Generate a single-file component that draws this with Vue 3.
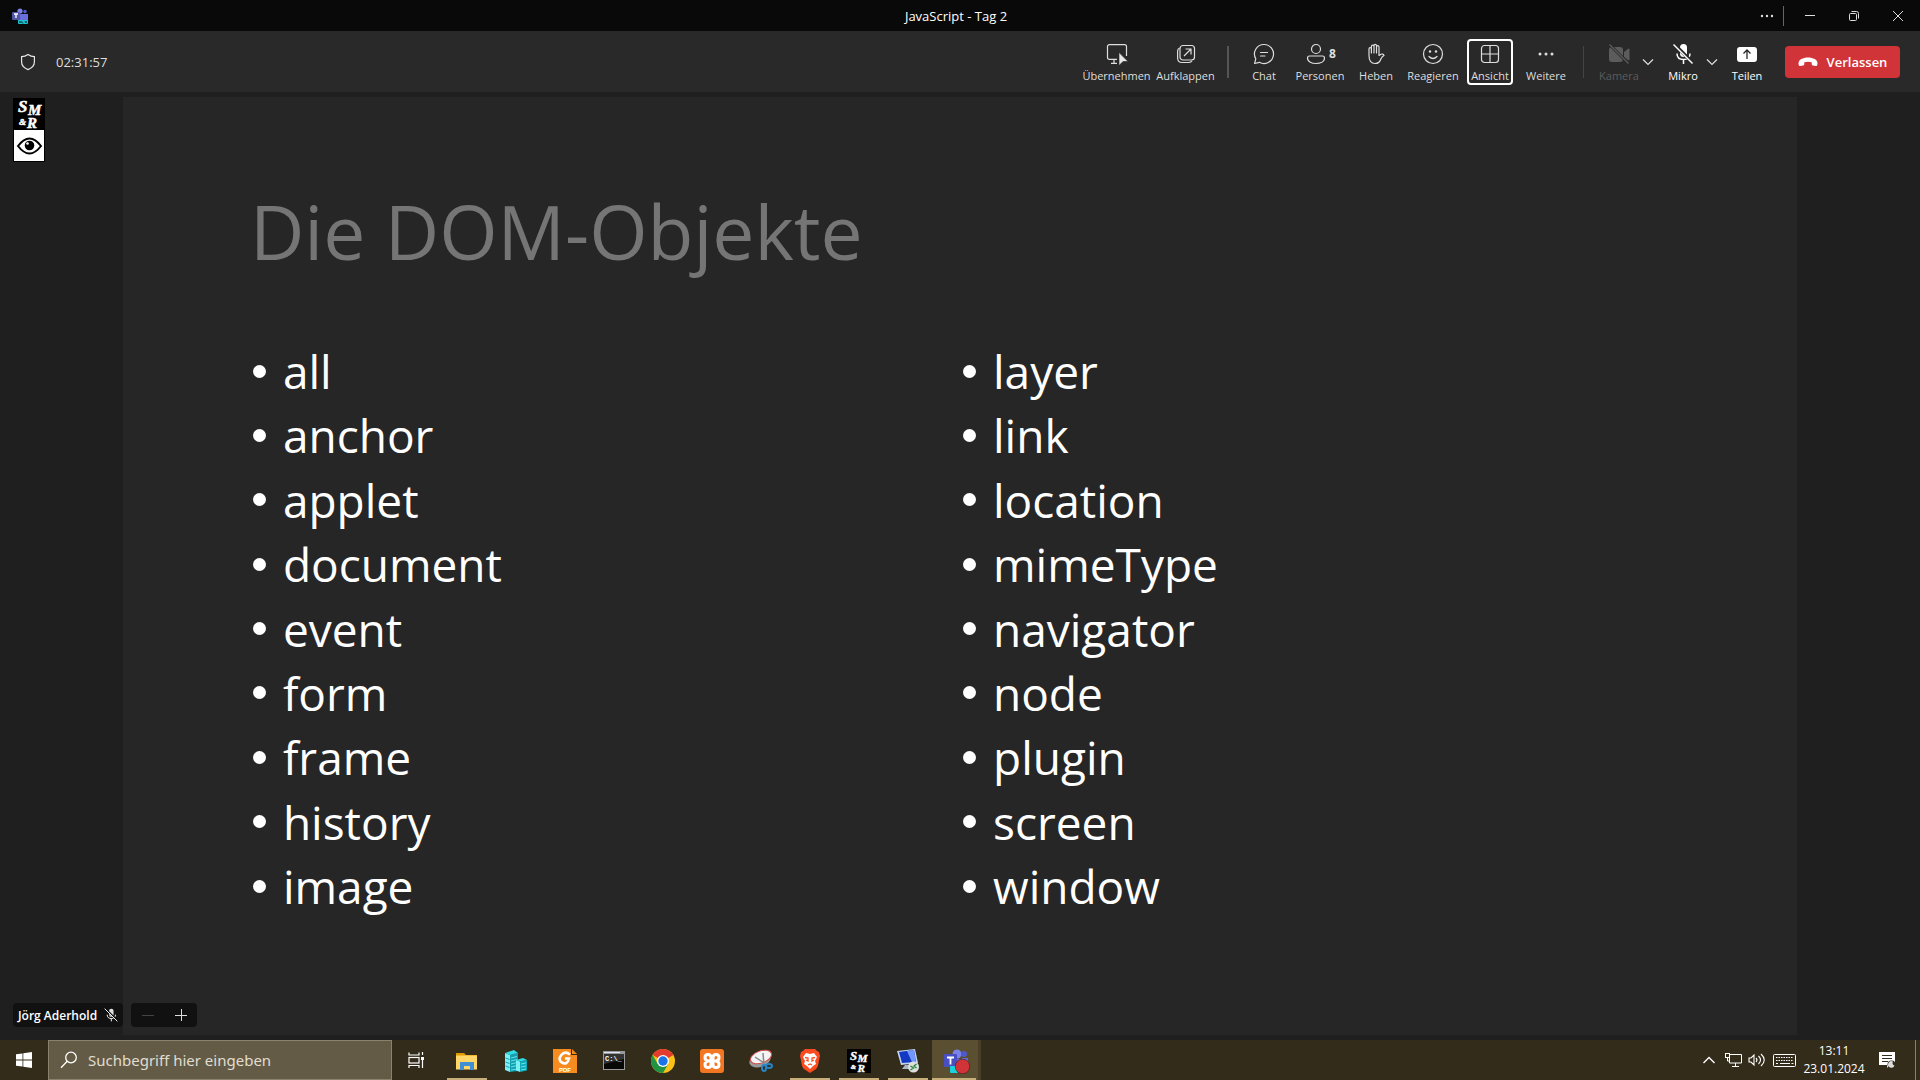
<script setup>
const leftColumn = ['all', 'anchor', 'applet', 'document', 'event', 'form', 'frame', 'history', 'image']
const rightColumn = ['layer', 'link', 'location', 'mimeType', 'navigator', 'node', 'plugin', 'screen', 'window']
</script>

<template>
  <div class="desktop">
    <header class="titlebar">
      <svg class="teams-logo" width="18" height="18" viewBox="0 0 18 18" aria-hidden="true">
        <circle cx="9" cy="4" r="2.6" fill="#7b83eb" />
        <circle cx="14" cy="4.600" r="1.800" fill="#5059c9" />
        <path d="M7 7h6v9H9q-2 0-2-3zM13 7h4v6q0 2-3 2h-1z" fill="#6970dc" />
        <rect x="1" y="5" width="8" height="8" rx="1" fill="#5157a7" />
        <path d="M3 7h4M5 7v4" stroke="#fff" stroke-width="1.300" fill="none" />
        <rect x="7" y="13" width="10" height="4" rx="1" fill="#17c7cf" />
        <path d="M8.500 16v-2l1.500 2v-2M11 14v2h1.500M14 14l.5 2 .7-2 .5 2" stroke="#123" stroke-width=".6" fill="none" />
      </svg>
      <h1 class="window-title">JavaScript - Tag 2</h1>
      <div class="window-buttons">
        <button class="win more" aria-label="Mehr">
          <svg width="14" height="4" viewBox="0 0 14 4" fill="#ddd"><circle cx="2" cy="2" r="1.200" /><circle cx="7" cy="2" r="1.200" /><circle cx="12" cy="2" r="1.200" /></svg>
        </button>
        <span class="win-divider"></span>
        <button class="win" aria-label="Minimieren">
          <svg width="12" height="12" viewBox="0 0 12 12" fill="none" stroke="#ddd"><path d="M1 5.500h10" /></svg>
        </button>
        <button class="win" aria-label="Wiederherstellen">
          <svg width="12" height="12" viewBox="0 0 12 12" fill="none" stroke="#ddd"><rect x="1.500" y="3.500" width="7" height="7" rx="1" /><path d="M3.500 1.500h5q2 0 2 2v5" /></svg>
        </button>
        <button class="win" aria-label="Schließen">
          <svg width="12" height="12" viewBox="0 0 12 12" fill="none" stroke="#ddd"><path d="M1 1l10 10M11 1L1 11" /></svg>
        </button>
      </div>
    </header>

    <nav class="toolbar">
      <svg class="shield" width="16" height="18" viewBox="0 0 16 18" fill="none" stroke="#e6e6e6" stroke-width="1.200"><path d="M8 1.500Q5 3.600 1.600 3.700V9q0 5 6.400 7.600Q14.400 14 14.400 9V3.700Q11 3.600 8 1.500z" /></svg>
      <time class="timer">02:31:57</time>

      <div class="actions">
        <button class="tool broad">
          <svg width="24" height="22" viewBox="0 0 24 22" fill="none" stroke="currentColor" stroke-width="1.200"><path d="M12 16.400H4.500q-2 0-2-2V3.600q0-2 2-2h15q2 0 2 2V13M9 16.400v4M6 20.400h6" /><path d="M14 9.500l9 9h-5l-4 4z" fill="#e6e6e6" stroke="#292929" stroke-width=".6" /></svg>
          <span>Übernehmen</span>
        </button>
        <button class="tool broad">
          <svg width="20" height="22" viewBox="0 0 20 22" fill="none" stroke="currentColor" stroke-width="1.200"><rect x="4" y="2.500" width="14.500" height="14.500" rx="3" /><path d="M3.500 5Q1.600 6 1.600 8v7q0 4.500 4.500 4.500H13q2 0 3-1.800M8 13l6.500-6.500M9.500 6h5.500v5.500" /></svg>
          <span>Aufklappen</span>
        </button>
        <span class="divider bright"></span>
        <button class="tool">
          <svg width="22" height="22" viewBox="0 0 22 22" fill="none" stroke="currentColor" stroke-width="1.200"><path d="M11 1.500a9.500 9.500 0 1 1-4.600 17.800L1.600 20.500l1.200-4.700A9.500 9.500 0 0 1 11 1.500zM7.500 9.500h7M7.500 13h4.500" stroke-linecap="round" stroke-linejoin="round" /></svg>
          <span>Chat</span>
        </button>
        <button class="tool">
          <span class="people">
            <svg width="20" height="22" viewBox="0 0 20 22" fill="none" stroke="currentColor" stroke-width="1.200"><circle cx="10" cy="6" r="4.500" /><path d="M3.500 13h13q2 0 2 2c0 4-4.500 5.500-8.500 5.500S1.500 19 1.500 15q0-2 2-2z" /></svg>
            <b>8</b>
          </span>
          <span>Personen</span>
        </button>
        <button class="tool">
          <svg width="20" height="22" viewBox="0 0 20 22" fill="none" stroke="currentColor" stroke-width="1.200" stroke-linecap="round" stroke-linejoin="round"><path d="M3 12.500V6q0-1.300 1.200-1.300T5.400 6v4M5.400 10V3.500q0-1.300 1.300-1.300T8 3.500V10M8 10V2.500q0-1.200 1.200-1.200t1.300 1.200V10M10.500 10V4q0-1.300 1.200-1.300T13 4v8.500l1.200-.8q1.300-1 2.500-.6 1 .4 1.300 1.400-2 1-3 3.200-1.500 4.800-6 4.800-6 0-6-8" /></svg>
          <span>Heben</span>
        </button>
        <button class="tool react">
          <svg width="22" height="22" viewBox="0 0 22 22" fill="none" stroke="currentColor" stroke-width="1.200"><circle cx="11" cy="11" r="9.500" /><path d="M7 13.500q4 4 8 0" stroke-linecap="round" /><circle cx="8" cy="8.500" r="1.200" fill="currentColor" stroke="none" /><circle cx="14" cy="8.500" r="1.200" fill="currentColor" stroke="none" /></svg>
          <span>Reagieren</span>
        </button>
        <button class="tool selected">
          <svg width="20" height="22" viewBox="0 0 20 22" fill="none" stroke="currentColor" stroke-width="1.200"><rect x="1.500" y="2.500" width="17" height="17" rx="3" /><path d="M10 2.500v17M1.500 11h17" /></svg>
          <span>Ansicht</span>
        </button>
        <button class="tool">
          <svg width="20" height="22" viewBox="0 0 20 22" fill="currentColor"><circle cx="4" cy="11" r="1.500" /><circle cx="10" cy="11" r="1.500" /><circle cx="16" cy="11" r="1.500" /></svg>
          <span>Weitere</span>
        </button>
        <span class="divider"></span>
        <button class="tool device" disabled>
          <svg width="22" height="22" viewBox="0 0 22 22" fill="currentColor"><rect x="1" y="4" width="14" height="15" rx="3" /><path d="M16 9l4.500-3.500q1 0 1 1v10q0 1-1 1L16 14z" /><path d="M1 1l20 20" stroke="#292929" stroke-width="3" /><path d="M1.500 1.500l19 19" stroke="currentColor" stroke-width="1.300" /></svg>
          <span>Kamera</span>
        </button>
        <button class="chevron" aria-label="Kameraoptionen">
          <svg width="12" height="8" viewBox="0 0 12 8" fill="none" stroke="currentColor" stroke-width="1.200"><path d="M1 1.500l5 5 5-5" /></svg>
        </button>
        <button class="tool device mic">
          <svg width="22" height="22" viewBox="0 0 22 22" fill="none" stroke="currentColor"><rect x="8" y="1" width="7" height="13" rx="3.500" fill="currentColor" stroke="none" /><path d="M5 10.500q0 6 6.500 6T18 10.500M11.500 16.500V21" stroke-width="1.500" /><path d="M2 1l19 19" stroke="#292929" stroke-width="3.500" /><path d="M1.500 1.500l19 19" stroke-width="1.400" /></svg>
          <span>Mikro</span>
        </button>
        <button class="chevron" aria-label="Mikrofonoptionen">
          <svg width="12" height="8" viewBox="0 0 12 8" fill="none" stroke="currentColor" stroke-width="1.200"><path d="M1 1.500l5 5 5-5" /></svg>
        </button>
        <button class="tool share">
          <svg width="22" height="22" viewBox="0 0 22 22"><rect x="1" y="4" width="20" height="15" rx="3" fill="#fff" /><path d="M11 16V7.500M7.500 10.500L11 7l3.500 3.500" fill="none" stroke="#292929" stroke-width="1.300" /></svg>
          <span>Teilen</span>
        </button>
        <button class="leave">
          <svg width="20" height="10" viewBox="0 0 20 10" fill="#fff"><path d="M10 .5c5 0 9.500 2.200 9.500 5.700 0 2-.6 3-1.800 2.800l-3-.6q-1-.3-1-1.400V5.300Q10 4 6.300 5.300V7q0 1.100-1 1.400l-3 .6C1.100 9.200.5 8.200.5 6.200.5 2.700 5 .5 10 .5z" /></svg>
          Verlassen
        </button>
      </div>
    </nav>

    <main class="stage">
      <article class="slide">
        <h2>Die DOM-Objekte</h2>
        <div class="columns">
          <ul>
            <li v-for="item in leftColumn" :key="item">{{ item }}</li>
          </ul>
          <ul>
            <li v-for="item in rightColumn" :key="item">{{ item }}</li>
          </ul>
        </div>
      </article>

      <aside class="smr-widget">
        <svg width="32" height="32" viewBox="0 0 32 32" class="smr" aria-hidden="true">
          <rect width="32" height="32" fill="#000" />
          <text x="5" y="14" font-size="17">S</text><text x="15" y="17" font-size="15">M</text><text x="6" y="27" font-size="9">&amp;</text><text x="14" y="30" font-size="15">R</text>
        </svg>
        <svg width="32" height="32" viewBox="0 0 32 32" aria-hidden="true">
          <rect width="32" height="32" fill="#000" /><rect x="1" width="30" height="31" fill="#fff" />
          <path d="M5 16q11.500-15 23 0-11.500 15-23 0z" fill="none" stroke="#000" stroke-width="2" /><circle cx="16.500" cy="15.500" r="4.800" /><circle cx="14.500" cy="13.500" r="1.300" fill="#fff" />
        </svg>
      </aside>

      <footer class="overlay">
        <div class="speaker">
          Jörg Aderhold
          <svg width="14" height="14" viewBox="0 0 22 22" fill="none" stroke="#fff"><rect x="8" y="1" width="7" height="13" rx="3.500" fill="#ddd" stroke="none" /><path d="M5 10.500q0 6 6.500 6T18 10.500M11.500 16.500V21" stroke-width="1.500" /><path d="M2 1l19 19" stroke="#111" stroke-width="3" /><path d="M1 1l20 20" stroke-width="1.500" /></svg>
        </div>
        <div class="zoom">
          <button aria-label="Verkleinern" disabled><svg width="12" height="12" viewBox="0 0 12 12" stroke="#444"><path d="M0 6.500h12" /></svg></button>
          <button aria-label="Vergrößern"><svg width="12" height="12" viewBox="0 0 12 12" stroke="#ddd"><path d="M0 6.500h12M6.500 0v12" /></svg></button>
        </div>
      </footer>
    </main>

    <footer class="taskbar">
      <button class="start" aria-label="Start">
        <svg width="16" height="16" viewBox="0 0 16 16" fill="#fff"><path d="M0 2.300l6.500-.9v6.200H0zM7.300 1.300L16 0v7.600H7.300zM0 8.400h6.500v6.200L0 13.700zM7.300 8.400H16V16l-8.700-1.300z" /></svg>
      </button>
      <label class="search">
        <svg width="18" height="18" viewBox="0 0 18 18" fill="none" stroke="#fff" stroke-width="1.300"><circle cx="11" cy="6.500" r="5.300" /><path d="M7.200 10.300L1 16.800" /></svg>
        <input type="text" placeholder="Suchbegriff hier eingeben" aria-label="Suchbegriff hier eingeben" />
      </label>
      <button class="task-view" aria-label="Taskansicht">
        <svg width="17" height="17" viewBox="0 0 17 17" fill="none" stroke="#fff" stroke-width="1.200"><path d="M1 .5v2.500h10V.5M1 16v-2.500h10V16M14.500 0v3M14.500 8v8" /><rect x="1" y="5.500" width="10" height="5.500" /><rect x="13" y="5" width="3" height="3" fill="#fff" stroke="none" /></svg>
      </button>

      <div class="apps">
        <button class="app open" aria-label="Explorer">
          <svg width="24" height="24" viewBox="0 0 24 24"><path d="M1 4h8l2 2h11v14H1z" fill="#e09a00" /><rect x="1" y="6.500" width="21" height="14" fill="#ffd667" /><path d="M5 21v-8h14v8h-4v-4H9v4z" fill="#3f8fd2" /></svg>
        </button>
        <button class="app" aria-label="Server">
          <svg width="24" height="24" viewBox="0 0 24 24"><path d="M1 4l5 2v17l-5-2z" fill="#7df0f5" /><path d="M6 6l8-2v18l-8 1z" fill="#149fb0" /><path d="M1 4l9-3 4 3-8 2z" fill="#2fdbe6" /><path d="M7 9l6-1.500M7 12l6-1.500M7 15l6-1.500M7 18l6-1.500M7 21l6-1" stroke="#5fe4ec" /><path d="M1.500 9l4 1.500M1.500 13l4 1.500M1.500 17l4 1.500" stroke="#149fb0" /><path d="M12 11l4 1.500V23l-4-1.500z" fill="#7df0f5" /><path d="M16 12.500l7-1.500v10.500L16 23z" fill="#10aabb" /><path d="M12 11l7-2 4 2-7 1.500z" fill="#2fdbe6" /><path d="M17 15l5-1M17 18l5-1M17 21l5-1" stroke="#5fe4ec" /></svg>
        </button>
        <button class="app" aria-label="PDF">
          <svg width="24" height="24" viewBox="0 0 24 24"><path d="M0 0h18v6h6v18H0z" fill="#f68b1f" /><path d="M19 0l5 5h-5z" fill="#f68b1f" /><path d="M17 5.500Q12 1.500 8.300 6t.5 7.500q5.500 3 7.200-4h-4" fill="none" stroke="#fff" stroke-width="2.600" /><text x="6" y="23" font-size="6" font-weight="700" fill="#fff" font-family="Liberation Sans, sans-serif">PDF</text></svg>
        </button>
        <button class="app" aria-label="Eingabeaufforderung">
          <svg width="24" height="24" viewBox="0 0 24 24"><rect x="1" y="2" width="22" height="19" fill="#999" /><rect x="2" y="5" width="20" height="15" fill="#080808" /><path d="M2 5h20v5L2 15z" fill="#333" /><rect x="2" y="3" width="16" height="1" fill="#dce5fa" /><text x="3" y="12" font-size="7" font-weight="700" fill="#fff" font-family="Liberation Mono, monospace">C:\_</text></svg>
        </button>
        <button class="app" aria-label="Chrome">
          <svg width="24" height="24" viewBox="0 0 24 24"><circle cx="12" cy="12" r="12" fill="#fbc116" /><path d="M12 12L1.600 6A12 12 0 0 1 22.400 6z" fill="#e33b2e" /><path d="M1.600 6A12 12 0 0 0 12 24l5.200-9H6.800z" fill="#229342" /><circle cx="12" cy="12" r="6" fill="#fff" /><circle cx="12" cy="12" r="4.700" fill="#1a73e8" /></svg>
        </button>
        <button class="app" aria-label="XAMPP">
          <svg width="24" height="24" viewBox="0 0 24 24"><rect width="24" height="24" rx="3" fill="#f37623" /><path d="M8 5.500q-3 0-3 3t3 3.500h8q3-.5 3-3.500t-3-3-3 3v7q0 3 3 3t3-3-3-3.500H8q-3 .5-3 3.500t3 3 3-3v-7q0-3-3-3z" fill="none" stroke="#fff" stroke-width="3" /></svg>
        </button>
        <button class="app" aria-label="Snipping Tool">
          <svg width="24" height="24" viewBox="0 0 24 24"><ellipse cx="11" cy="11" rx="11" ry="7" transform="rotate(-20 11 11)" fill="#999" /><ellipse cx="12" cy="8" rx="11" ry="6" transform="rotate(-20 12 8)" fill="#f4f4f4" stroke="#d14e4e" /><path d="M6 8l9 6M14 4l1 12" stroke="#888" stroke-width="1.500" /><g fill="none" stroke="#2585c7" stroke-width="2"><ellipse cx="15" cy="19" rx="2" ry="3" /><ellipse cx="20" cy="17" rx="3" ry="2" /></g></svg>
        </button>
        <button class="app open" aria-label="Brave">
          <svg width="24" height="24" viewBox="0 0 24 24"><path d="M7 0h10l2 2 2 1 1 4-1 4q-1 8-3 9l-6 4-6-4q-2-1-3-9L2 7l1-4 2-1z" fill="#fb4b20" /><path d="M8 4l4 1 4-1 3 4-2 4 1 3-3 2-3 3-3-3-3-2 1-3-2-4z" fill="#fff" /><path d="M7 8.500l3 .5v3l-2-1M17 8.500l-3 .5v3l2-1M10 16l2-1 2 1" fill="none" stroke="#fb4b20" stroke-width="1.300" /></svg>
        </button>
        <button class="app open" aria-label="SMR">
          <svg width="24" height="24" viewBox="0 0 32 32" class="smr"><rect width="32" height="32" fill="#000" /><text x="4" y="14" font-size="17">S</text><text x="14" y="17" font-size="15">M</text><text x="5" y="27" font-size="9">&amp;</text><text x="14" y="30" font-size="15">R</text></svg>
        </button>
        <button class="app open" aria-label="Remotedesktop">
          <svg width="24" height="24" viewBox="0 0 24 24"><path d="M1 2l18-2 3 14-17 2z" fill="#c4d5ea" /><path d="M3 3l15-2 2 12-14 1z" fill="#1238c4" /><path d="M11 2l7-1 2 12-4 .3z" fill="#7298ff" /><path d="M9 16h6l1 4H6z" fill="#a9b8c6" /><circle cx="17.500" cy="18" r="5.500" fill="#dedede" /><path d="M14.500 17l3 2-3 2M20.500 15l-2.500 2 2.500 2" fill="none" stroke="#288c39" stroke-width="1.400" /></svg>
        </button>
        <button class="app open active" aria-label="Teams">
          <svg width="28" height="26" viewBox="0 0 28 26"><circle cx="14" cy="6" r="4.500" fill="#7b83eb" /><circle cx="21" cy="6" r="3" fill="#5059c9" /><path d="M11 11h9v13h-4q-5 0-5-5zM19 10h6v9h-6z" fill="#6269ce" /><rect x="1" y="6" width="13" height="13" rx="1" fill="#474fc2" /><path d="M4 9.500h7M7.500 9.500v7" stroke="#fff" stroke-width="1.800" /><rect x="7" y="18" width="8" height="7" rx="1" fill="#19d3dc" /><circle cx="19.500" cy="18.500" r="7.300" fill="#d13438" stroke="#311" stroke-width=".5" /></svg>
        </button>
      </div>

      <div class="tray">
        <button class="tray-chevron" aria-label="Ausgeblendete Symbole"><svg width="12" height="8" viewBox="0 0 12 8" fill="none" stroke="#fff" stroke-width="1.400"><path d="M.5 7L6 1.500 11.500 7" /></svg></button>
        <button class="tray-icon" aria-label="Netzwerk"><svg width="17" height="14" viewBox="0 0 17 14" fill="none" stroke="#fff"><path d="M5 1.500h11.500v8.500h-12V5M10.500 10v3M7 13.500h7" /><rect x=".5" y=".5" width="4" height="4" /><path d="M2.500 4.500V8H5" /></svg></button>
        <button class="tray-icon" aria-label="Lautstärke"><svg width="18" height="14" viewBox="0 0 18 14" fill="none" stroke="#fff" stroke-width="1.100"><path d="M1 5h2l3-3v10L3 9H1zM8 5q2 2 0 4M10.500 3q4 4 0 8M13 1q6.500 6 0 12" /></svg></button>
        <button class="tray-keyboard" aria-label="Bildschirmtastatur"><svg width="23" height="13" viewBox="0 0 23 13" fill="none" stroke="#fff"><rect x=".5" y=".5" width="22" height="12" rx="1" /><path d="M3 3.500h17M3 6.500h17" stroke-dasharray="1.500 1" /><path d="M3 9.500h2M7 9.500h10M18.500 9.500h2" /></svg></button>
        <time class="clock"><span>13:11</span><span>23.01.2024</span></time>
        <button class="notice" aria-label="Benachrichtigungen"><svg width="17" height="17" viewBox="0 0 17 17"><path d="M0 0h16v12h-5l-3 4v-3H0z" fill="#fff" /><path d="M3 3.500h10M3 6.500h10M3 9.500h6" stroke="#332c1b" /><circle cx="12.500" cy="12.500" r="4" fill="#332c1b" /><path d="M14 9.500a3.300 3.300 0 1 0 1.500 4q-3-1-1.500-4" fill="#ddd" /></svg></button>
        <span class="show-desktop"></span>
      </div>
    </footer>
  </div>
</template>

<style>
body { background: #1f1f1f; }
</style>

<style scoped>
* { box-sizing: border-box; }
.desktop { min-height: 100vh; display: flex; flex-direction: column; background: #1f1f1f; color: #fff; font-family: "Open Sans", "Noto Sans", sans-serif; overflow: hidden; }
svg { display: block; flex: none; }
button { margin: 0; padding: 0; border: 0; background: none; color: inherit; font: inherit; display: flex; align-items: center; justify-content: center; }

.titlebar { height: 31px; display: grid; grid-template-columns: 1fr auto 1fr; align-items: center; background: #090909; }
.teams-logo { margin-left: 11px; }
.window-title { margin: 0; padding-right: 8px; font-size: 13px; line-height: 18px; font-weight: 400; }
.window-buttons { display: flex; align-items: center; justify-content: flex-end; }
.win { width: 44px; height: 31px; }
.win.more { width: 32px; }
.win-divider { width: 1px; height: 20px; margin-right: 4px; background: #666; }

.toolbar { height: 61px; display: flex; align-items: center; padding: 0 20px; background: #292929; color: #dedede; }
.timer { margin-left: 20px; font-size: 13px; }
.actions { margin-left: auto; display: flex; align-items: center; }
.tool { width: 56px; height: 46px; flex-direction: column; justify-content: flex-start; padding-top: 4px; gap: 2px; font-size: 11px; line-height: 18px; white-space: nowrap; }
.tool.broad { width: 69px; }
.tool.react { width: 58px; }
.tool.selected { width: 46px; margin: 0 5px; padding-top: 2px; border: 2px solid #fff; border-radius: 4px; }
.tool.device { width: 42px; }
.tool:disabled { color: #5c5c5c; }
.tool.mic, .tool.share { color: #fff; }
.tool.mic { margin-left: 6px; }
.tool.share { width: 46px; margin: 0 15px 0 4px; }
.people { display: flex; align-items: center; gap: 3px; padding-left: 2px; font-size: 12px; }
.divider { width: 1px; height: 32px; margin: 0 14px 0 9px; background: #444; }
.divider.bright { width: 2px; margin: 0 7px; background: #555; }
.chevron { width: 16px; height: 24px; color: #dedede; }
.leave { width: 115px; height: 32px; gap: 9px; border-radius: 4px; background: #d13438; color: #fff; font-size: 13px; font-weight: 600; }

.stage { position: relative; flex: 1; display: flex; justify-content: center; padding: 5px 0; }
.slide { width: 87.2%; padding: 83px 127px 0 127px; background: #262626; }
.slide h2 { margin: 0; color: #757575; font-size: 75px; line-height: 102px; font-weight: 400; white-space: nowrap; }
.columns { display: grid; grid-template-columns: 1fr 1fr; margin-top: 57px; height: 579px; }
.columns ul { margin: 0; padding: 0; list-style: none; display: flex; flex-direction: column; justify-content: space-between; }
.columns li { display: flex; align-items: center; font-size: 46px; line-height: 64px; }
.columns li::before { content: ""; width: 13px; height: 13px; margin: 0 17px 0 3px; border-radius: 50%; background: #fff; }

.smr-widget { position: absolute; left: 13px; top: 6px; }
.smr text { fill: #fff; stroke: #fff; stroke-width: 0.5px; font-family: "Liberation Serif", serif; font-weight: 700; font-style: italic; }
.overlay { position: absolute; left: 13px; bottom: 13px; display: flex; gap: 8px; }
.speaker { height: 24px; padding: 0 5px; display: flex; align-items: center; gap: 7px; border-radius: 4px; background: #111; font-size: 12px; font-weight: 600; }
.zoom { width: 66px; height: 24px; display: flex; border-radius: 4px; background: #111; }
.zoom button { flex: 1; }

.taskbar { height: 40px; display: flex; align-items: stretch; background: #332c1b; }
.start, .task-view { width: 48px; }
.search { width: 344px; display: flex; align-items: center; gap: 10px; padding: 0 11px; border: 1px solid #8a836b; background: #635b45; }
.search input { flex: 1; min-width: 0; padding: 0; border: 0; outline: 0; background: none; color: #fff; font: inherit; font-size: 14px; }
.search input { font-size: 15px; font-family: "Noto Sans", "Open Sans", sans-serif; }
.search input::placeholder { color: #e0ddd2; opacity: 1; }
.apps { display: flex; margin-left: 2px; }
.app { width: 49px; padding-top: 2px; position: relative; }
.app.open::after { content: ""; position: absolute; left: 5px; bottom: 0; width: 40px; height: 2px; background: #c8ae78; }
.app.active { padding-left: 4px; background: #5a4f30; border-right: 3px solid #4a4026; }
.app.active::after { left: 0; width: 44px; }
.tray { margin-left: auto; display: flex; align-items: center; }
.tray-chevron, .tray-icon { width: 24px; height: 40px; }
.tray-keyboard { width: 30px; height: 40px; }
.clock { width: 70px; display: flex; flex-direction: column; align-items: center; font-size: 12px; line-height: 18px; }
.notice { width: 36px; height: 40px; }
.show-desktop { width: 5px; height: 40px; margin-left: 10px; border-left: 1px solid #8a836b; }
</style>
